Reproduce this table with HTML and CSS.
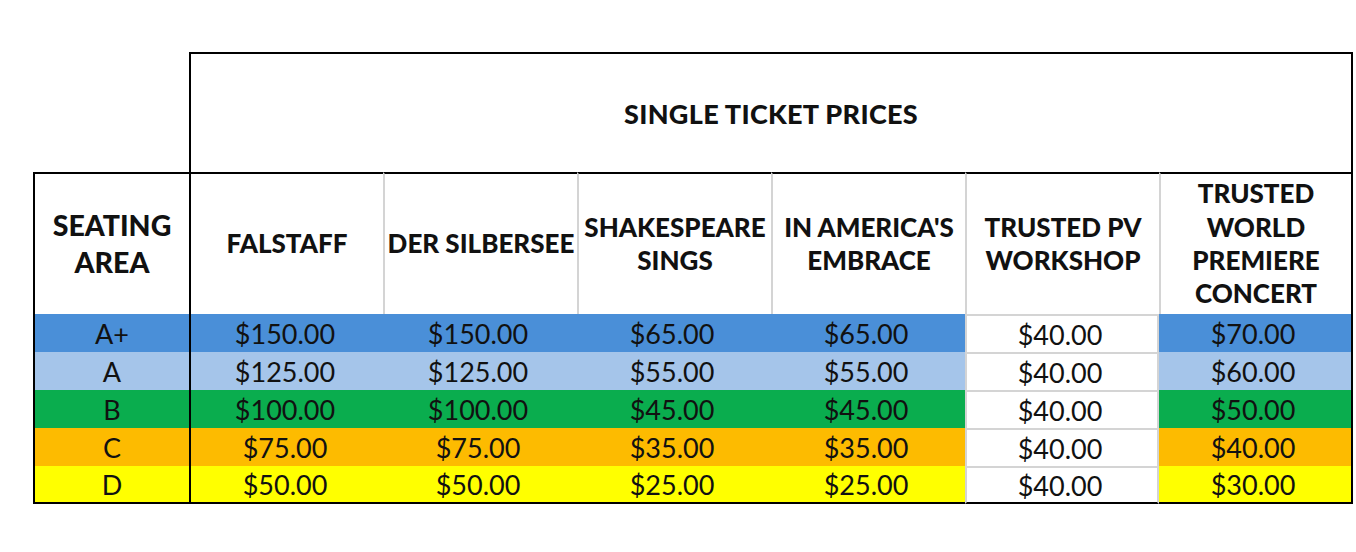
FILE: index.html
```html
<!DOCTYPE html>
<html lang="en">
<head>
<meta charset="utf-8">
<title>Single Ticket Prices</title>
<link rel="stylesheet" href="styles.css">
</head>
<body>
<table class="prices">
  <colgroup>
    <col class="c-area">
    <col class="c-show"><col class="c-show"><col class="c-show">
    <col class="c-show"><col class="c-show"><col class="c-show">
  </colgroup>
  <thead>
    <tr class="r-title">
      <td class="blank"></td>
      <th class="title" colspan="6">SINGLE TICKET PRICES</th>
    </tr>
    <tr class="r-head">
      <th class="seat">SEATING<br>AREA</th>
      <th class="show first">FALSTAFF</th>
      <th class="show">DER SILBERSEE</th>
      <th class="show">SHAKESPEARE<br>SINGS</th>
      <th class="show">IN AMERICA'S<br>EMBRACE</th>
      <th class="show">TRUSTED PV<br>WORKSHOP</th>
      <th class="show last">TRUSTED<br>WORLD<br>PREMIERE<br>CONCERT</th>
    </tr>
  </thead>
  <tbody>
    <tr class="tier t-aplus">
      <td class="area">A+</td><td class="first">$150.00</td><td>$150.00</td><td>$65.00</td><td>$65.00</td><td class="pv">$40.00</td><td class="last">$70.00</td>
    </tr>
    <tr class="tier t-a">
      <td class="area">A</td><td class="first">$125.00</td><td>$125.00</td><td>$55.00</td><td>$55.00</td><td class="pv">$40.00</td><td class="last">$60.00</td>
    </tr>
    <tr class="tier t-b">
      <td class="area">B</td><td class="first">$100.00</td><td>$100.00</td><td>$45.00</td><td>$45.00</td><td class="pv">$40.00</td><td class="last">$50.00</td>
    </tr>
    <tr class="tier t-c">
      <td class="area">C</td><td class="first">$75.00</td><td>$75.00</td><td>$35.00</td><td>$35.00</td><td class="pv">$40.00</td><td class="last">$40.00</td>
    </tr>
    <tr class="tier t-d end">
      <td class="area">D</td><td class="first">$50.00</td><td>$50.00</td><td>$25.00</td><td>$25.00</td><td class="pv">$40.00</td><td class="last">$30.00</td>
    </tr>
  </tbody>
</table>
</body>
</html>
```

FILE: styles.css
```css
html, body {
  margin: 0;
  padding: 0;
  background: #ffffff;
}

body {
  font-family: Lato, "Liberation Sans", sans-serif;
  color: #111111;
}

.prices {
  margin: 52px 0 0 33px;
  border-collapse: separate;
  border-spacing: 0;
  table-layout: fixed;
  width: 1320px;
}

.c-area { width: 156px; }
.c-show { width: 194px; }

.prices th,
.prices td {
  padding: 0;
  text-align: center;
  vertical-align: middle;
}

.r-title { height: 120px; }
.r-head { height: 142px; }
.tier { height: 38px; }

.title {
  border: 2px solid #000;
  border-bottom: 0;
  font-weight: 900;
  font-size: 27px;
  letter-spacing: 0.3px;
}

.r-head th {
  border-top: 2px solid #000;
  font-weight: 900;
  font-size: 26px;
  line-height: 33.3px;
}

.r-head .seat {
  border-left: 2px solid #000;
  font-size: 28.5px;
  line-height: 37.3px;
}

.r-head .show {
  border-left: 2px solid #d4d4d4;
}

.r-head .show.first {
  border-left: 2px solid #000;
}

.r-head .show.last {
  border-right: 2px solid #000;
}

.tier td {
  font-size: 27px;
  font-weight: 400;
  line-height: 1;
  padding-right: 4px;
}

.tier .area {
  border-left: 2px solid #000;
  padding-right: 0;
}

.tier .first {
  border-left: 2px solid #000;
}

.tier .last {
  border-right: 2px solid #000;
}

.tier .pv {
  background: #ffffff;
  border-left: 2px solid #d4d4d4;
  border-right: 2px solid #d4d4d4;
  border-top: 2px solid #d4d4d4;
}

.tier.end td {
  border-bottom: 2px solid #000;
}

.t-aplus td { background: #4a8fd8; }
.t-a td { background: #a5c5ea; }
.t-b td { background: #0aad4e; }
.t-c td { background: #fdbb00; }
.t-d td { background: #ffff00; }

.tier td.pv { background: #ffffff; }
```
